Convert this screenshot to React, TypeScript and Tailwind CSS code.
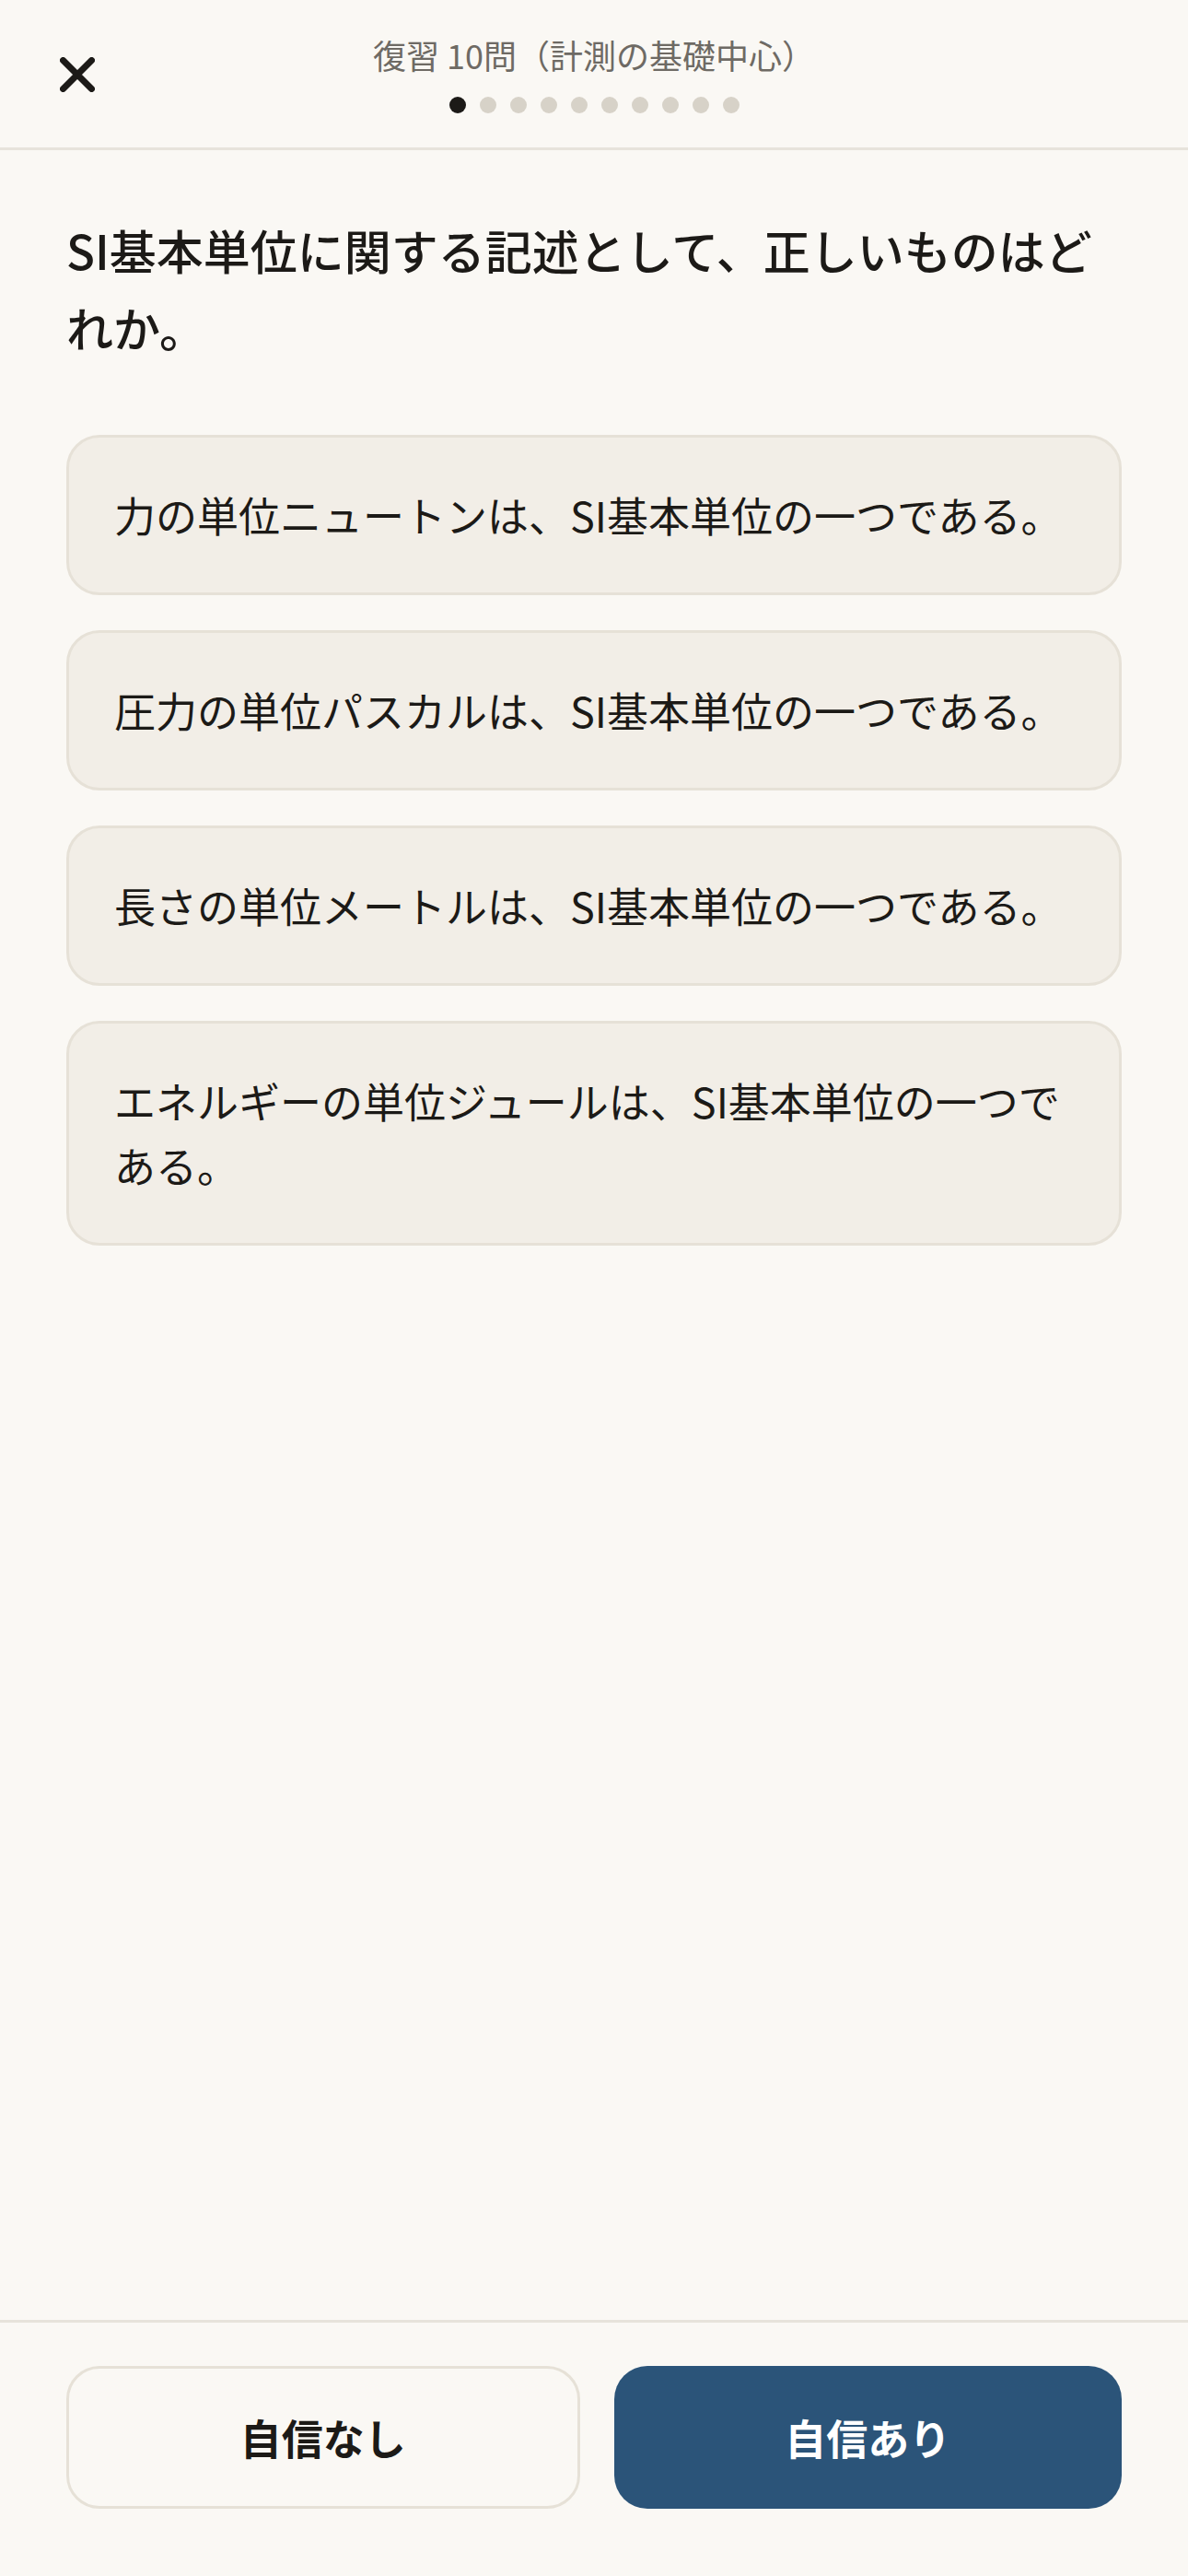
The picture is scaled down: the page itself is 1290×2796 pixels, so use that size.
import React from "react"

const font = { fontFamily: '"Noto Sans CJK JP", "Noto Sans", sans-serif' }

const options = [
  "力の単位ニュートンは、SI基本単位の一つである。",
  "圧力の単位パスカルは、SI基本単位の一つである。",
  "長さの単位メートルは、SI基本単位の一つである。",
  "エネルギーの単位ジュールは、SI基本単位の一つである。",
]

function CloseIcon() {
  return (
    <svg width="38" height="38" viewBox="0 0 38 38" fill="none">
      <path d="M3.5 3.5 L34.5 34.5 M34.5 3.5 L3.5 34.5" stroke="#1c1a17" strokeWidth="7" strokeLinecap="round" />
    </svg>
  )
}

export default function App() {
  return (
    <div className="flex min-h-screen flex-col bg-[#faf8f4] text-[#1c1a17]" style={font}>
      {/* Header */}
      <header className="grid h-[163px] grid-cols-[1fr_auto_1fr] border-b-[3px] border-[#e7e3db]">
        <div className="pl-[65px] pt-[62px]">
          <button className="block">
            <CloseIcon />
          </button>
        </div>
        <div className="flex flex-col items-center pt-[34px]">
          <p className="text-[36px] leading-[50px] text-[#6e6a64]">復習 10問（計測の基礎中心）</p>
          <div className="mt-[21px] flex gap-[15px]">
            {Array.from({ length: 10 }).map((_, i) => (
              <span
                key={i}
                className={i === 0 ? "h-[18px] w-[18px] rounded-full bg-[#1c1a17]" : "h-[18px] w-[18px] rounded-full bg-[#d7d2c8]"}
              />
            ))}
          </div>
        </div>
        <div />
      </header>

      {/* Question */}
      <main className="flex-1 px-[72px] pt-[66px]">
        <h1 className="text-[51px] font-medium leading-[84px]">SI基本単位に関する記述として、正しいものはどれか。</h1>
        <div className="mt-[75px] flex flex-col gap-[38px]">
          {options.map((opt) => (
            <button
              key={opt}
              className="rounded-[36px] border-[3px] border-[#e6e1d7] bg-[#f2eee7] px-[49px] py-[49px] text-left text-[45px] leading-[70px]"
            >
              {opt}
            </button>
          ))}
        </div>
      </main>

      {/* Footer */}
      <footer className="flex gap-[37px] border-t-[3px] border-[#e7e3db] px-[72px] pb-[73px] pt-[47px]">
        <button className="flex h-[155px] flex-1 items-center justify-center rounded-[36px] border-[3px] border-[#e6e1d7] bg-[#faf8f4] text-[45px] font-bold">
          自信なし
        </button>
        <button className="flex h-[155px] flex-1 items-center justify-center rounded-[36px] bg-[#2b5479] text-[45px] font-bold text-white">
          自信あり
        </button>
      </footer>
    </div>
  )
}
